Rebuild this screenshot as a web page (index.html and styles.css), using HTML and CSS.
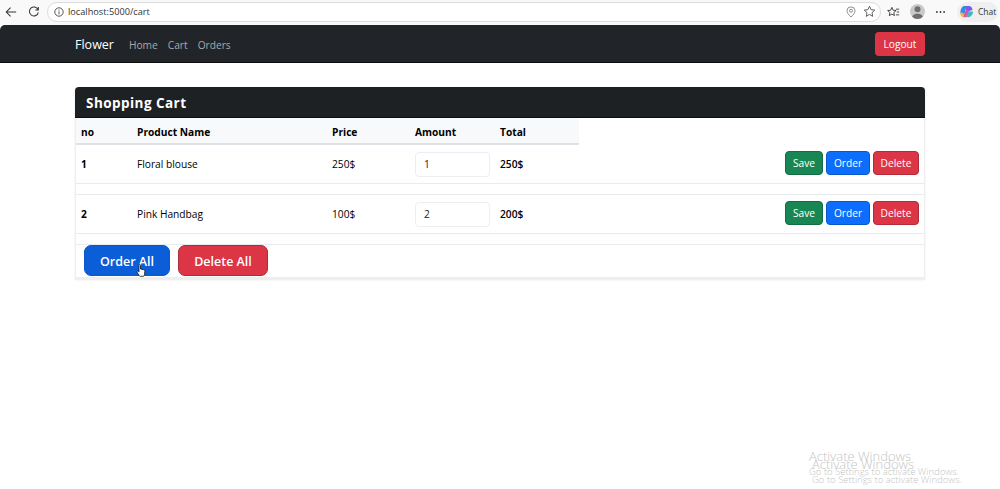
FILE: index.html
```html
<!DOCTYPE html>
<html lang="en">
<head>
    <meta charset="UTF-8">
    <title>Shopping Cart</title>
    <link rel="stylesheet" href="styles.css">
</head>
<body>
<header class="browser-bar">
    <svg class="tool-icon back-icon" viewBox="0 0 14 14"><path d="M13 7H1.5M6.5 2 1.5 7l5 5"/></svg>
    <svg class="tool-icon reload-icon" viewBox="0 0 14 14"><path d="M11.6 4.2A5.2 5.2 0 1 0 12 7.4M12 1.2v3.4H8.6"/></svg>
    <div class="address-bar">
        <svg class="info-icon" viewBox="0 0 10 10"><circle cx="5" cy="5" r="4.2"/><path d="M5 4.4v3M5 2.6v1"/></svg>
        <span class="address-text">localhost:5000/cart</span>
        <svg class="pin-icon" viewBox="0 0 12 14"><path d="M6 13C3 10 1.2 8 1.2 5.6a4.8 4.8 0 0 1 9.6 0C10.800 8 9 10 6 13Z"/><circle cx="6" cy="5.500" r="1.800"/></svg>
        <svg class="star-icon" viewBox="0 0 14 14"><path d="m7 1.300 1.700 3.700 4 .5-3 2.700.8 4L7 10.200l-3.500 2 .8-4-3-2.700 4-.5Z"/></svg>
    </div>
    <svg class="fav-icon" viewBox="0 0 16 14"><path d="m6 1.300 1.500 3.500 3.700.4-2.800 2.500.8 3.700L6 9.600l-3.200 1.800.8-3.700L.8 5.200l3.700-.4Z"/><path d="M11 3.500h4M12 7h3M11 10.500h4"/></svg>
    <span class="avatar">
        <svg viewBox="0 0 14 14"><circle cx="7" cy="4.800" r="2.800"/><path d="M1.500 14c0-3.500 2.500-5 5.500-5s5.500 1.500 5.500 5Z"/></svg>
    </span>
    <svg class="more-dots" viewBox="0 0 10 2"><circle cx="1" cy="1" r="1"/><circle cx="5" cy="1" r="1"/><circle cx="9" cy="1" r="1"/></svg>
    <span class="chat-pill">
        <svg viewBox="0 0 16 16">
            <path fill="#2f8fe8" d="M5 2h3L5.500 12 2 11C.5 8 2.500 3 5 2Z"/>
            <path fill="#f4b63a" d="M1.500 9 5 9.500 4.500 14C2.500 14 1 11.500 1.500 9Z"/>
            <path fill="#e8509a" d="M4.500 14 8 4l3 1-2 8c-1 1-3 1.500-4.500 1Z"/>
            <path fill="#7a5be6" d="M7 2h4c2 .5 3 2 3.500 4L10 8 7 5Z"/>
            <path fill="#3fb6c9" d="M10 8h5c0 3-2 5-4 6H8Z"/>
        </svg>
        Chat
    </span>
</header>

<nav class="navbar">
    <div class="nav-left">
        <a class="brand">Flower</a>
        <a class="nav-link">Home</a>
        <a class="nav-link">Cart</a>
        <a class="nav-link">Orders</a>
    </div>
    <button class="btn btn-red btn-logout">Logout</button>
</nav>

<main class="cart-card">
    <h2 class="cart-title">Shopping Cart</h2>
    <div class="cart-head cols">
        <span>no</span>
        <span>Product Name</span>
        <span>Price</span>
        <span>Amount</span>
        <span>Total</span>
    </div>
    <div class="cart-row">
        <div class="cols">
            <b>1</b>
            <span>Floral blouse</span>
            <span>250$</span>
            <span><input class="amount-input" type="text" value="1"></span>
            <b class="total">250$</b>
        </div>
        <div class="row-actions">
            <button class="btn btn-green">Save</button>
            <button class="btn btn-blue">Order</button>
            <button class="btn btn-red">Delete</button>
        </div>
    </div>
    <div class="cart-row">
        <div class="cols">
            <b>2</b>
            <span>Pink Handbag</span>
            <span>100$</span>
            <span><input class="amount-input" type="text" value="2"></span>
            <b class="total">200$</b>
        </div>
        <div class="row-actions">
            <button class="btn btn-green">Save</button>
            <button class="btn btn-blue">Order</button>
            <button class="btn btn-red">Delete</button>
        </div>
    </div>
    <div class="cart-footer">
        <button class="btn btn-blue btn-large">Order All</button>
        <button class="btn btn-red btn-large">Delete All</button>
        <svg class="hand-cursor" viewBox="0 0 10 14"><path d="M3 1.200c.7-.6 1.500-.2 1.500.7v3.600l3.300.8c.8.2 1.200.7 1.100 1.500L8.500 11c-.1 1-.6 1.800-1.500 1.800H4.500c-.8 0-1.200-.4-1.600-1L.9 8.500c-.4-.8.600-1.500 1.300-.8l.8.9Z"/></svg>
    </div>
</main>

<div class="activate-note note-back">
    <div class="note-big">Activate Windows</div>
    <div class="note-small">Go to Settings to activate Windows.</div>
</div>
<div class="activate-note note-front">
    <div class="note-big">Activate Windows</div>
    <div class="note-small">Go to Settings to activate Windows.</div>
</div>
</body>
</html>
```

FILE: styles.css
```css
* {
    box-sizing: border-box;
}
body {
    margin: 0;
    height: 489px;
    overflow: hidden;
    position: relative;
    background-color: #fff;
    color: #000;
    font-family: "Open Sans", "Noto Sans", sans-serif;
    font-size: 10.200px;
}

/* browser chrome */
.browser-bar {
    display: flex;
    align-items: center;
    height: 25px;
    padding: 0 0 2px 5px;
    background-color: #f9f9fa;
}
.browser-bar > * {
    flex: none;
}
.tool-icon {
    width: 12px;
    height: 12px;
    fill: none;
    stroke: #333;
    stroke-width: 1.200;
}
.reload-icon {
    margin-left: 11px;
}
.address-bar {
    display: flex;
    align-items: center;
    width: 834px;
    height: 20px;
    margin-left: 7px;
    padding: 0 4px 0 6px;
    background-color: #fff;
    border: 1px solid #dcdcdc;
    border-radius: 10px;
}
.info-icon {
    width: 10px;
    height: 10px;
    fill: none;
    stroke: #444;
    stroke-width: 0.900;
}
.address-text {
    flex: 1;
    margin-left: 4px;
    font-size: 9.200px;
    color: #333;
}
.pin-icon {
    width: 10px;
    height: 12px;
    fill: none;
    stroke: #777;
}
.star-icon {
    width: 13px;
    height: 13px;
    margin-left: 7px;
    fill: none;
    stroke: #555;
}
.fav-icon {
    width: 13px;
    height: 12px;
    margin-left: 6px;
    fill: none;
    stroke: #222;
}
.avatar {
    width: 15px;
    height: 15px;
    margin-left: 10px;
    border-radius: 50%;
    background-color: #c9c9c9;
    overflow: hidden;
}
.avatar svg {
    display: block;
    fill: #6f6f6f;
}
.more-dots {
    width: 9px;
    height: 2px;
    margin-left: 11px;
    fill: #333;
}
.chat-pill {
    display: flex;
    align-items: center;
    gap: 4px;
    width: 41px;
    height: 20px;
    margin-left: 12px;
    padding: 0 0 0 2px;
    background-color: #efefef;
    border-radius: 10px;
    font-size: 8.500px;
    color: #333;
}
.chat-pill svg {
    flex: none;
    width: 15px;
    height: 15px;
}

/* navbar */
.navbar {
    display: flex;
    align-items: center;
    justify-content: space-between;
    height: 38px;
    padding: 0 75px;
    background-color: #212529;
    border-bottom: 1px solid #0c0d0e;
    border-radius: 5px 5px 0 0;
}
.nav-left {
    display: flex;
    align-items: center;
    padding-top: 2px;
}
.brand {
    margin-right: 15px;
    font-size: 12.500px;
    color: #fff;
}
.nav-link {
    margin-right: 10px;
    font-size: 10.200px;
    color: #a9a9a9;
}

/* buttons */
.btn {
    height: 24px;
    padding: 0 6px;
    border-radius: 4px;
    font-family: inherit;
    font-size: 10.200px;
    color: #fff;
}
.btn-green {
    width: 38px;
    background-color: #198754;
    border: 1px solid #146c43;
}
.btn-blue {
    width: 44px;
    background-color: #0d6efd;
    border: 1px solid #0a58ca;
}
.btn-red {
    width: 46px;
    background-color: #dc3545;
    border: 1px solid #b02a37;
}
.btn-logout {
    width: 50px;
    border: 0;
}
.btn-large {
    width: 86px;
    height: 31px;
    padding: 1px 0 0;
    border-radius: 7px;
    font-size: 12.500px;
    font-weight: 600;
}
.btn-large.btn-blue {
    background-color: #0b5ed7;
}
.btn-large.btn-red {
    width: 90px;
}

/* cart */
.cart-card {
    width: 850px;
    margin: 24px 0 0 75px;
    border-right: 1px solid #efefef;
    border-left: 1px solid #efefef;
    box-shadow: 0 1px 2px #e8e8e8;
}
.cart-title {
    height: 31px;
    margin: 0 -1px;
    padding-left: 11px;
    background-color: #1e2124;
    border-bottom: 1px solid #0c0d0e;
    border-radius: 4px 4px 0 0;
    font-size: 13.500px;
    font-weight: 700;
    line-height: 32px;
    letter-spacing: 0.450px;
    color: #fff;
}
.cols {
    display: grid;
    grid-template-columns: 56px 195px 83px 85px 78px;
    align-items: center;
    width: 503px;
    padding-left: 5px;
}
.cart-head {
    height: 27px;
    padding-top: 3px;
    background-color: #f8f9fa;
    border-bottom: 2px solid #dee2e6;
    font-weight: 700;
}
.cart-row {
    display: flex;
    align-items: center;
    justify-content: space-between;
    height: 40px;
    margin-bottom: 10px;
    padding-right: 5px;
    border-bottom: 1px solid #e9ecef;
}
.cart-row + .cart-row {
    border-top: 1px solid #e9ecef;
}
.cart-head + .cart-row {
    height: 39px;
}
.amount-input {
    display: block;
    width: 75px;
    height: 25px;
    padding: 0 8px;
    border: 1px solid #eceef0;
    border-radius: 4px;
    font-family: inherit;
    font-size: 10.200px;
    color: #222;
}
.total {
    font-weight: 600;
}
.row-actions {
    display: flex;
    gap: 3px;
    padding-bottom: 2px;
}
.row-actions .btn {
    padding: 0;
}
.cart-footer {
    position: relative;
    display: flex;
    gap: 8px;
    height: 35px;
    padding: 0 8px;
    border-top: 1px solid #e9ecef;
    border-bottom: 2px solid #eeeeee;
}
.hand-cursor {
    position: absolute;
    top: 18px;
    left: 60px;
    width: 10px;
    height: 15px;
    fill: #fff;
    stroke: #111;
    stroke-width: 0.800;
}

/* windows watermark */
.activate-note {
    position: absolute;
    color: #c4c4c4;
    line-height: 1;
}
.note-back {
    top: 450px;
    left: 809px;
}
.note-front {
    top: 458px;
    left: 812px;
}
.note-big {
    font-size: 13px;
    font-weight: 300;
}
.note-small {
    margin-top: 4px;
    font-size: 9.500px;
    font-weight: 300;
}
```
